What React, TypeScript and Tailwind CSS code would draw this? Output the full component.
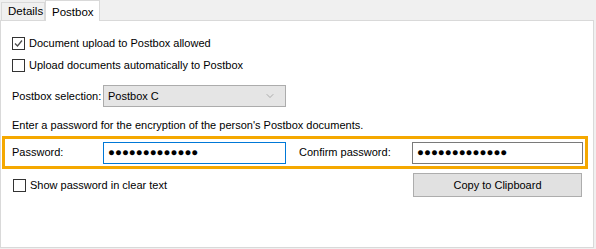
import { ChevronDown } from 'lucide-react'

const font = { fontFamily: '"Liberation Sans", Arial, sans-serif' }

function CheckBox({ checked, label }: { checked?: boolean; label: string }) {
  return (
    <div className="flex h-[13px] items-center">
      <div className="relative h-[13px] w-[13px] shrink-0 border border-[#333333] bg-white">
        {checked && (
          <svg className="absolute left-[1px] top-[1px]" width="9" height="9" viewBox="0 0 9 9">
            <polyline points="1,4.5 3.5,7 8,1.5" fill="none" stroke="#4d4d4d" strokeWidth="1.3" />
          </svg>
        )}
      </div>
      <span className="ml-[4px] whitespace-nowrap text-[11px] leading-none text-black">{label}</span>
    </div>
  )
}

function Dots({ focused, width }: { focused?: boolean; width: string }) {
  return (
    <div
      className={`flex h-[22px] items-center border bg-white pl-[4px] ${width} ${focused ? 'border-[#0078d7]' : 'border-[#7a7a7a]'}`}
    >
      <span className="text-[11.5px] leading-none text-black" style={font}>
        ●●●●●●●●●●●●●
      </span>
    </div>
  )
}

export default function App() {
  return (
    <div className="h-[249px] w-[596px] overflow-hidden bg-[#f0f0f0] text-[11px] text-black" style={font}>
      <div className="flex h-[20px] items-end">
        <div className="ml-[1px] flex h-[18px] w-[44px] items-center border border-b-0 border-[#d9d9d9] bg-[#f0f0f0] pl-[6px] text-[11.5px]">
          Details
        </div>
        <div className="relative z-10 -mb-px flex h-[21px] w-[55px] items-start border border-b-0 border-[#d9d9d9] bg-white pl-[6px] pt-[3px] text-[11.5px]">
          Postbox
        </div>
      </div>

      <div className="flex h-[228px] w-[594px] flex-col border border-[#d9d9d9] bg-white">
        <div className="ml-[11px] mt-[16px]">
          <CheckBox checked label="Document upload to Postbox allowed" />
        </div>
        <div className="ml-[11px] mt-[9px]">
          <CheckBox label="Upload documents automatically to Postbox" />
        </div>

        <div className="mt-[13px] flex items-center">
          <span className="ml-[11px] w-[91px] whitespace-nowrap">Postbox selection:</span>
          <div className="flex h-[22px] w-[183px] items-center justify-between border border-[#acacac] bg-[#e5e5e5] pl-[4px] pr-[9px]">
            <span>Postbox C</span>
            <ChevronDown size={12} strokeWidth={1.1} className="text-[#7a7a7a]" />
          </div>
        </div>

        <p className="ml-[11px] mt-[10px] h-[16px] leading-[16px]">
          Enter a password for the encryption of the person's Postbox documents.
        </p>

        <div className="ml-[1px] mt-[3px] flex h-[33px] w-[586px] items-center border-[3px] border-[#f5a800]">
          <span className="ml-[7px] w-[91px] whitespace-nowrap">Password:</span>
          <Dots focused width="w-[183px]" />
          <span className="ml-[13px] w-[113px] whitespace-nowrap">Confirm password:</span>
          <Dots width="w-[171px]" />
        </div>

        <div className="mt-[4px] flex items-center">
          <div className="ml-[12px]">
            <CheckBox label="Show password in clear text" />
          </div>
          <button className="ml-auto mr-[11px] h-[24px] w-[169px] border border-[#adadad] bg-[#e1e1e1] text-[11px] text-black">
            Copy to Clipboard
          </button>
        </div>
      </div>
    </div>
  )
}
